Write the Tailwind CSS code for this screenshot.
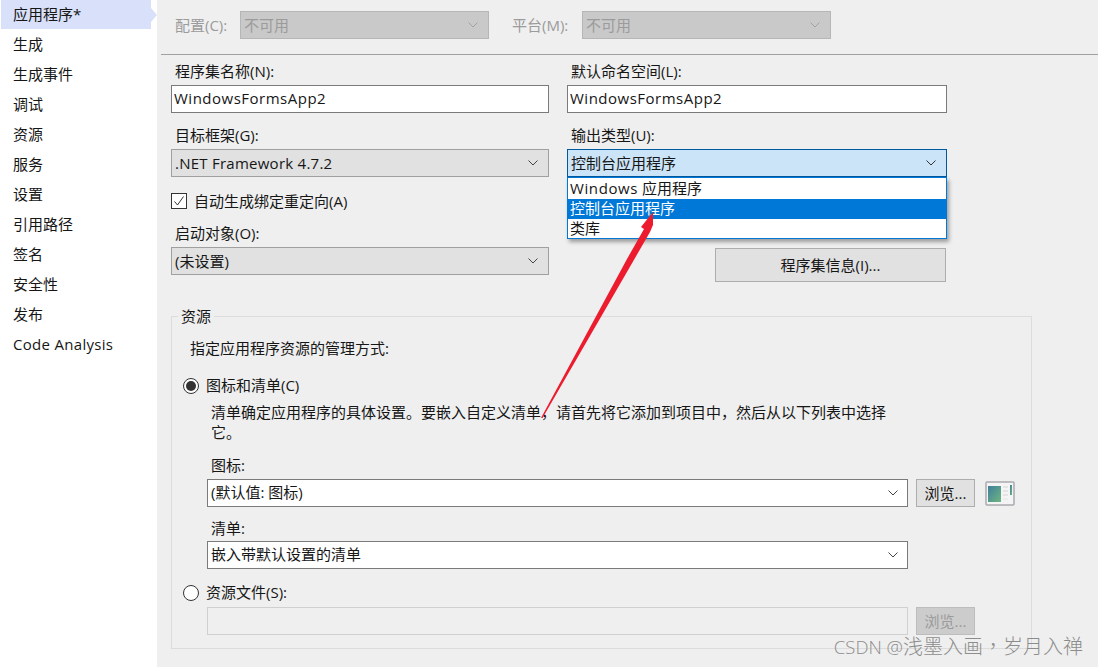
<!DOCTYPE html>
<html lang="zh-CN">
<head>
  <meta charset="UTF-8">
  <meta name="viewport" content="width=device-width, initial-scale=1.0">
  <title>WindowsFormsApp2</title>
  <script src="https://cdn.jsdelivr.net/npm/@tailwindcss/browser@4"></script>
</head>
<body class="bg-[#efefef]">
  <div class="relative flex h-[667px] w-[1098px] overflow-hidden font-['Open_Sans','Noto_Sans_CJK_SC',sans-serif] text-[15px] leading-[20px] text-[#161616]">

    <!-- Sidebar -->
    <nav class="w-[157px] shrink-0 bg-white">
      <div class="relative ml-px flex h-[29px] w-[150px] items-center bg-[#d9e0f9] pl-[12px] pb-px">
        应用程序*
        <span class="absolute left-[150px] top-[8px] h-[14px] w-[6px] bg-[#d9e0f9] [clip-path:polygon(0_0,100%_50%,0_100%)]"></span>
      </div>
      <div class="flex h-[30px] items-center pl-[13px] pb-px">生成</div>
      <div class="flex h-[30px] items-center pl-[13px]">生成事件</div>
      <div class="flex h-[30px] items-center pl-[13px]">调试</div>
      <div class="flex h-[30px] items-center pl-[13px]">资源</div>
      <div class="flex h-[30px] items-center pl-[13px]">服务</div>
      <div class="flex h-[30px] items-center pl-[13px]">设置</div>
      <div class="flex h-[30px] items-center pl-[13px]">引用路径</div>
      <div class="flex h-[30px] items-center pl-[13px]">签名</div>
      <div class="flex h-[30px] items-center pl-[13px]">安全性</div>
      <div class="flex h-[30px] items-center pl-[13px]">发布</div>
      <div class="flex h-[30px] items-center pl-[13px] tracking-[0.3px]">Code Analysis</div>
    </nav>

    <!-- Main form -->
    <main class="flex-1 pl-[4px]">
      <!-- Config / platform -->
      <div class="flex h-[55px] items-start border-b border-[#a0a0a0] pt-[11px] text-[#9b9b9b]">
        <span class="ml-[14px] flex h-[28px] w-[65px] items-center whitespace-nowrap">配置(C):</span>
        <div class="flex h-[28px] w-[249px] items-center justify-between border border-[#b6b6b6] bg-[#c9c9c9] pl-[3px] pr-[10px]">
          <span>不可用</span>
          <svg class="h-[6px] w-[10px]" viewBox="0 0 10 6" fill="none" stroke="#a3a3a3"><path d="M.5.5 5 5 9.5.5"/></svg>
        </div>
        <span class="ml-[23px] flex h-[28px] w-[70px] items-center whitespace-nowrap">平台(M):</span>
        <div class="flex h-[28px] w-[249px] items-center justify-between border border-[#b6b6b6] bg-[#c9c9c9] pl-[3px] pr-[10px]">
          <span>不可用</span>
          <svg class="h-[6px] w-[10px]" viewBox="0 0 10 6" fill="none" stroke="#a3a3a3"><path d="M.5.5 5 5 9.5.5"/></svg>
        </div>
      </div>

      <div class="pl-[10px]">
        <!-- Assembly fields -->
        <div class="flex gap-[18px] pt-[6px]">
          <div class="w-[378px]">
            <div class="pl-[4px]">程序集名称(N):</div>
            <div class="mt-[4px] flex h-[28px] items-center border border-[#7a7a7a] bg-white pb-[2px] pl-[2px] tracking-[0.5px]">WindowsFormsApp2</div>
            <div class="mt-[12px] pl-[4px]">目标框架(G):</div>
            <div class="mt-[4px] flex h-[28px] items-center justify-between border border-[#a0a0a0] bg-[#e1e1e1] pl-[3px] pr-[10px]">
              <span class="tracking-[0.25px]">.NET Framework 4.7.2</span>
              <svg class="h-[6px] w-[10px]" viewBox="0 0 10 6" fill="none" stroke="#444"><path d="M.5.5 5 5 9.5.5"/></svg>
            </div>
            <div class="mt-[14px] flex h-[20px] items-center">
              <span class="flex h-[16px] w-[16px] items-center justify-center border border-[#333] bg-white">
                <svg class="h-[12px] w-[12px]" viewBox="0 0 12 12" fill="none" stroke="#333"><path d="M1.5 6.5 4.5 10 10.5 1.5"/></svg>
              </span>
              <span class="ml-[7px]">自动生成绑定重定向(A)</span>
            </div>
            <div class="mt-[12px] pl-[4px]">启动对象(O):</div>
            <div class="mt-[4px] flex h-[28px] items-center justify-between border border-[#a0a0a0] bg-[#e1e1e1] pl-[3px] pr-[10px]">
              <span>(未设置)</span>
              <svg class="h-[6px] w-[10px]" viewBox="0 0 10 6" fill="none" stroke="#444"><path d="M.5.5 5 5 9.5.5"/></svg>
            </div>
          </div>

          <div class="w-[380px]">
            <div class="pl-[4px]">默认命名空间(L):</div>
            <div class="mt-[4px] flex h-[28px] items-center border border-[#7a7a7a] bg-white pb-[2px] pl-[2px] tracking-[0.5px]">WindowsFormsApp2</div>
            <div class="mt-[12px] pl-[4px]">输出类型(U):</div>
            <div class="relative mt-[4px] h-[28px]">
              <div class="flex h-[28px] items-center justify-between border border-[#005a9e] bg-[#cce4f7] pl-[3px] pr-[10px]">
                <span>控制台应用程序</span>
                <svg class="h-[6px] w-[10px]" viewBox="0 0 10 6" fill="none" stroke="#333"><path d="M.5.5 5 5 9.5.5"/></svg>
              </div>
              <!-- Open dropdown -->
              <div class="absolute left-0 top-[28px] z-10 h-[62px] w-[380px] border border-[#0078d7] bg-white pt-px shadow-[2px_3px_4px_rgba(0,0,0,0.35)]">
                <div class="flex h-[20px] items-center pb-[2px] pl-[2px]"><span><span class="tracking-[0.6px]">Windows</span> 应用程序</span></div>
                <div class="flex h-[20px] items-center bg-[#0078d7] pb-[2px] pl-[2px] text-white">控制台应用程序</div>
                <div class="flex h-[20px] items-center pb-[2px] pl-[2px]">类库</div>
              </div>
            </div>
            <button class="ml-[148px] mt-[71px] flex h-[34px] w-[231px] items-center justify-center border border-[#adadad] bg-[#e1e1e1]">程序集信息(I)...</button>
          </div>
        </div>

        <!-- Resources group -->
        <fieldset class="relative mt-[34px] h-[333px] w-[861px] border border-[#dcdcdc] pl-[11px] pt-[21px]">
          <span class="absolute -top-[11px] left-[6px] bg-[#efefef] px-[3px]">资源</span>
          <div class="ml-[7px]">指定应用程序资源的管理方式:</div>

          <div class="mt-[18px] flex h-[20px] items-center">
            <span class="flex h-[16px] w-[16px] items-center justify-center rounded-full border border-[#333] bg-white">
              <span class="h-[10px] w-[10px] rounded-full bg-[#333]"></span>
            </span>
            <span class="ml-[7px] pb-[2px]">图标和清单(C)</span>
          </div>
          <div class="ml-[28px] mt-[6px] whitespace-nowrap">清单确定应用程序的具体设置。要嵌入自定义清单，请首先将它添加到项目中，然后从以下列表中选择<br>它。</div>

          <div class="ml-[28px] mt-[13px]">图标:</div>
          <div class="ml-[24px] mt-[4px] flex items-center">
            <div class="flex h-[28px] w-[701px] items-center justify-between border border-[#7a7a7a] bg-white pl-[3px] pr-[9px]">
              <span class="pb-[2px]">(默认值: 图标)</span>
              <svg class="h-[6px] w-[10px]" viewBox="0 0 10 6" fill="none" stroke="#444"><path d="M.5.5 5 5 9.5.5"/></svg>
            </div>
            <button class="ml-[8px] flex h-[28px] w-[59px] items-center justify-center border border-[#adadad] bg-[#e1e1e1]">浏览...</button>
            <svg class="ml-[10px] h-[25px] w-[30px]" viewBox="0 0 30 25">
              <defs>
                <linearGradient id="iconFill" x1="0" y1="0" x2="1" y2="1">
                  <stop offset="0" stop-color="#3f7f99"/>
                  <stop offset="1" stop-color="#6fb583"/>
                </linearGradient>
              </defs>
              <rect x="1" y="1" width="28" height="23" rx="1" fill="#f4f4f4" stroke="#a9a9b0" stroke-width="1.5"/>
              <rect x="3" y="5" width="13" height="16" fill="url(#iconFill)"/>
              <rect x="18" y="5" width="5" height="2" fill="#e4e4e4"/>
              <rect x="18" y="9" width="5" height="2" fill="#e4e4e4"/>
              <rect x="18" y="13" width="5" height="2" fill="#e4e4e4"/>
              <rect x="18" y="17" width="5" height="2" fill="#ececec"/>
              <rect x="25" y="4" width="2" height="10" fill="url(#iconFill)"/>
            </svg>
          </div>

          <div class="ml-[28px] mt-[11px]">清单:</div>
          <div class="ml-[24px] mt-[3px] flex h-[28px] w-[701px] items-center justify-between border border-[#7a7a7a] bg-white pl-[3px] pr-[9px]">
            <span class="pb-[3px]">嵌入带默认设置的清单</span>
            <svg class="h-[6px] w-[10px]" viewBox="0 0 10 6" fill="none" stroke="#444"><path d="M.5.5 5 5 9.5.5"/></svg>
          </div>

          <div class="mt-[14px] flex h-[20px] items-center">
            <span class="h-[16px] w-[16px] rounded-full border border-[#333] bg-white"></span>
            <span class="ml-[7px] pb-[2px]">资源文件(S):</span>
          </div>
          <div class="ml-[24px] mt-[4px] flex items-center">
            <div class="h-[28px] w-[701px] border border-[#d0d0d0] bg-[#efefef]"></div>
            <button class="ml-[8px] flex h-[28px] w-[59px] items-center justify-center border border-[#bdbdbd] bg-[#cccccc] text-[#9b9b9b]">浏览...</button>
          </div>
        </fieldset>
      </div>
    </main>

    <!-- Red annotation arrow -->
    <svg class="absolute left-0 top-0 z-20 h-[667px] w-[1098px]" viewBox="0 0 1098 667">
      <polygon points="541,418 627,259 644,229 641,227 653,212 653,225 650,232 631,265 542.5,418" fill="#ec1c2e"/>
    </svg>

    <!-- Watermark -->
    <div class="absolute bottom-[9px] right-[15px] z-30 whitespace-nowrap text-[20px] font-light leading-[22px] text-[#8c8c8c]"><span class="text-[18.5px]">CSDN @</span>浅墨入画<span lang="zh-TW" class="font-['Noto_Sans_CJK_TC',sans-serif]">，</span>岁月入禅</div>
  </div>
</body>
</html>
